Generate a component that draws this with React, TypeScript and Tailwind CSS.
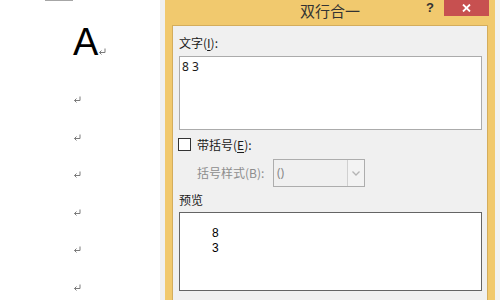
const cjk = { fontFamily: '"Noto Sans CJK SC", "Noto Sans", sans-serif' };
const latin = { fontFamily: '"Noto Sans", "Noto Sans CJK SC", sans-serif' };

function ReturnMark() {
  return (
    <svg width="8" height="7" viewBox="0 0 8 7" className="block">
      <path d="M7 0.5V4.5H1.5" fill="none" stroke="#7a7a7a" strokeWidth="1" />
      <path d="M3.5 2.5L1.5 4.5L3.5 6.5" fill="none" stroke="#7a7a7a" strokeWidth="1" />
    </svg>
  );
}

function DocPage() {
  return (
    <div className="w-[160px] shrink-0 bg-white flex flex-col">
      {/* crop mark */}
      <div className="ml-[45px] w-[28px] h-[5px] border-b border-r border-[#a6a6a6]" />
      <div className="mt-[22px] ml-[73px] flex items-end h-[38px]">
        <span className="text-[38px] leading-none text-black" style={{ fontFamily: '"Liberation Sans", Arial, sans-serif' }}>
          A
        </span>
        <span className="mb-[6px]">
          <ReturnMark />
        </span>
      </div>
      <div className="mt-[20px] flex flex-col">
        {[0, 1, 2, 3, 4, 5].map((i) => (
          <div key={i} className="h-[37.5px] flex items-center pl-[73px]">
            <ReturnMark />
          </div>
        ))}
      </div>
    </div>
  );
}

function Combo() {
  return (
    <div className="w-[92px] h-[28px] border border-[#adadad] bg-[#f0f0f0] flex">
      <div className="flex-1 flex items-center pl-[3px] text-[12px] text-[#8a8a8a]" style={latin}>
        ()
      </div>
      <div className="w-[17px] border-l border-[#d0d0d0] bg-[#f3f3f3] flex items-center justify-center">
        <svg width="8" height="5" viewBox="0 0 8 5">
          <path d="M0.5 0.5L4 4L7.5 0.5" fill="none" stroke="#b4b4b4" strokeWidth="1.3" />
        </svg>
      </div>
    </div>
  );
}

function Dialog() {
  return (
    <div className="w-[330px] shrink-0 bg-[#f1c96e] flex flex-col">
      {/* title bar */}
      <div className="h-[25px] relative shrink-0">
        <div className="text-center text-[15px] leading-[21px] text-[#333333]" style={cjk}>
          双行合一
        </div>
        <span
          className="absolute left-[261px] top-[-2px] text-[13px] font-bold text-[#333333]"
          style={{ fontFamily: '"Liberation Sans", Arial, sans-serif' }}
        >
          ?
        </span>
        <div className="absolute right-[6px] top-0 w-[45px] h-[16px] bg-[#c75050] flex items-center justify-center">
          <svg width="9" height="8" viewBox="0 0 9 8">
            <path d="M1 0.5L8 7.5M8 0.5L1 7.5" stroke="#ffffff" strokeWidth="1.8" />
          </svg>
        </div>
      </div>

      {/* client area */}
      <div className="mx-[7px] flex-1 border-t border-l border-r border-[#d4ad5c] bg-[#f0f0f0] pl-[6px] pr-[5px] pt-[9px] text-[12px] text-[#1a1a1a]">
        <div className="leading-[16px]" style={cjk}>
          文字(<span className="underline underline-offset-2">I</span>):
        </div>
        <div className="mt-[5px] h-[74px] border border-[#ababab] bg-white pt-[2px] pl-[2px] leading-[16px]" style={latin}>
          8 3
        </div>

        <div className="mt-[8px] h-[13px] flex items-center -ml-px">
          <div className="w-[13px] h-[13px] border border-[#333333] bg-white" />
          <span className="ml-[6px] leading-[16px]" style={cjk}>
            带括号(<span className="underline underline-offset-2">E</span>):
          </span>
        </div>

        <div className="mt-[8px] ml-[18px] flex items-center">
          <span className="w-[76px] leading-[16px] text-[#8d8d8d]" style={cjk}>
            括号样式(B):
          </span>
          <Combo />
        </div>

        <div className="mt-[5px] leading-[16px]" style={cjk}>
          预览
        </div>
        <div
          className="mt-[4px] h-[79px] border border-[#646464] bg-white pt-[13px] pl-[32px] text-black"
          style={{ fontFamily: '"Liberation Sans", Arial, sans-serif' }}
        >
          <div className="leading-[15px]">8</div>
          <div className="leading-[15px]">3</div>
        </div>
      </div>
    </div>
  );
}

export default function App() {
  return (
    <div className="w-[500px] h-[300px] overflow-hidden flex bg-white">
      <DocPage />
      <div className="w-[5px] shrink-0 bg-[#f0f0f0]" />
      <Dialog />
      <div className="flex-1 bg-[#f2f2f2]" />
    </div>
  );
}
